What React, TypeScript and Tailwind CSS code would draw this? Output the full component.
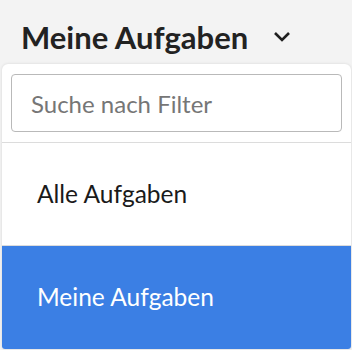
import { useState } from 'react';

export default function App() {
  const [query, setQuery] = useState('');
  const options = ['Alle Aufgaben', 'Meine Aufgaben'];
  const selected = 'Meine Aufgaben';

  return (
    <div className="h-[350px] w-[352px] overflow-hidden bg-[#f3f3f3] font-['Lato',sans-serif]">
      {/* header */}
      <div className="flex h-[64px] items-center pl-[21px] pt-[10px]">
        <h1 className="text-[31px] font-bold leading-none text-[#222]">Meine Aufgaben</h1>
        <svg className="ml-[25px] mt-[0px]" width="18" height="12" viewBox="0 0 18 12" fill="none">
          <path d="M2 2 L9 9 L16 2" stroke="#1f1f1f" strokeWidth="2.6" />
        </svg>
      </div>

      {/* dropdown */}
      <div className="ml-[2px] mr-[1px] h-[285px] overflow-hidden rounded-t-[6px] rounded-b-[3px] bg-white shadow-[0_0_3px_rgba(0,0,0,0.12)]">
        <div className="border-b border-[#dcdcdc] px-[9px] pb-[10px] pt-[10px]">
          <input
            value={query}
            onChange={(e) => setQuery(e.target.value)}
            placeholder="Suche nach Filter"
            className="h-[58px] w-full rounded-[4px] border border-[#b9b9b9] px-[19px] text-[24px] text-[#222] outline-none placeholder:text-[#767676]"
          />
        </div>
        {options.map((opt) => (
          <div
            key={opt}
            className={`flex h-[103px] items-center px-[35px] text-[24.5px] ${
              opt === selected ? 'bg-[#3b7fe4] text-white' : 'border-b border-[#dcdcdc] text-[#1a1a1a]'
            }`}
          >
            {opt}
          </div>
        ))}
      </div>
    </div>
  );
}
